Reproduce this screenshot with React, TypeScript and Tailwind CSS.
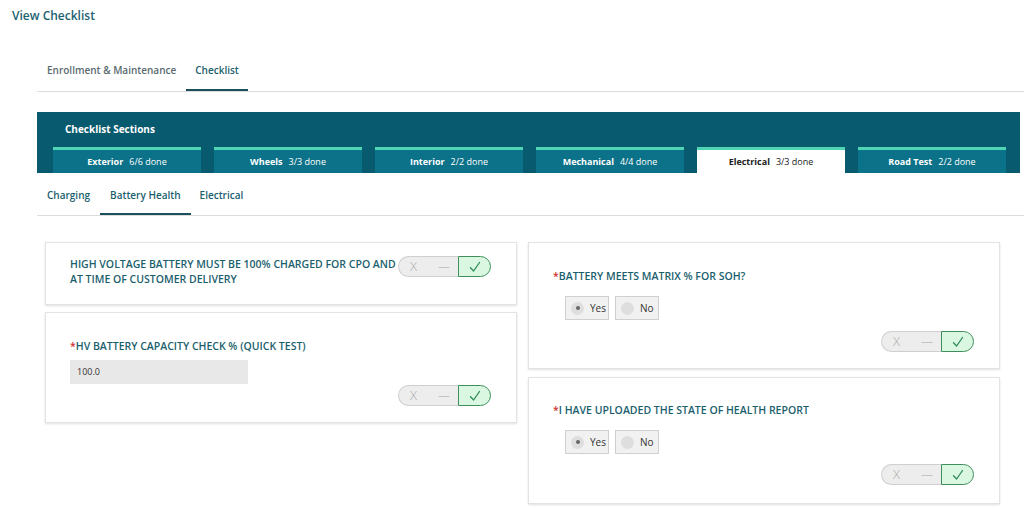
import React from "react";

const sections = [
  { name: "Exterior", done: "6/6 done" },
  { name: "Wheels", done: "3/3 done" },
  { name: "Interior", done: "2/2 done" },
  { name: "Mechanical", done: "4/4 done" },
  { name: "Electrical", done: "3/3 done", active: true },
  { name: "Road Test", done: "2/2 done" },
];

function Toggle() {
  return (
    <div className="flex h-[21px] w-[93px] items-stretch">
      <div className="flex flex-1 items-center rounded-l-full border border-r-0 border-[#cfcfcf] bg-[#ededed] pl-[11px] text-[13px] font-light text-[#a8a8a8]">
        <span className="w-[28px]">X</span>
        <span className="text-[12px]">—</span>
      </div>
      <div className="flex w-[33px] items-center justify-center rounded-r-full border border-[#3f8f5c] bg-[#d9f7e1]">
        <svg width="12" height="12" viewBox="0 0 12 12" fill="none">
          <path d="M1.5 6.8 L4.6 10 L10.5 1.5" stroke="#2e8b57" strokeWidth="1.3" strokeLinecap="round" strokeLinejoin="round" />
        </svg>
      </div>
    </div>
  );
}

function Radio({ label, checked }: { label: string; checked?: boolean }) {
  return (
    <div className="flex h-[24px] w-[44px] items-center gap-[6px] border border-[#d0d0d0] bg-[#f1f1f1] pl-[5px] text-[10px] text-[#333]">
      <span className="flex h-[13px] w-[13px] items-center justify-center rounded-full bg-[#dedede]">
        {checked && <span className="h-[4px] w-[4px] rounded-full bg-[#666]" />}
      </span>
      <span>{label}</span>
    </div>
  );
}

const cardCls =
  "border border-[#e3e3e3] shadow-[0_1px_2px_rgba(0,0,0,0.12)] pl-[24px] pr-[25px]";
const labelCls = "text-[10.5px] font-semibold text-[#1b5f6e] leading-[14px]";

export default function App() {
  return (
    <div
      className="h-[508px] w-[1024px] overflow-hidden bg-white"
      style={{ fontFamily: "'Open Sans', 'Noto Sans', sans-serif" }}
    >
      <div className="pl-[12px] pt-[7px] text-[12px] font-semibold leading-[17px] text-[#1b6272]">View Checklist</div>

      <div className="ml-[37px] mt-[39px] flex border-b border-[#dcdcdc] text-[10px] font-semibold leading-[14px]">
        <div className="px-[10px] pb-[14px] text-[#5a6b70]">Enrollment &amp; Maintenance</div>
        <div className="border-b-2 border-[#1b4f5c] px-[9px] pb-[12px] text-[#1b5f6e]">Checklist</div>
      </div>

      <div className="ml-[37px] mr-[4px] mt-[20px] h-[61px] bg-[#085a6e] pt-[10px]">
        <div className="pl-[28px] text-[10px] font-bold leading-[14px] text-white">Checklist Sections</div>
        <div className="mt-[11px] flex gap-[13px] pl-[16px]">
          {sections.map((s) => (
            <div
              key={s.name}
              className={`flex h-[26px] w-[148px] items-center justify-center gap-[6px] border-t-[3px] border-[#4fd4b4] text-[9px] ${
                s.active ? "bg-white text-[#222]" : "bg-[#0b7289] text-white"
              }`}
            >
              <span className="font-bold">{s.name}</span>
              <span>{s.done}</span>
            </div>
          ))}
        </div>
      </div>

      <div className="ml-[37px] mt-[8px] flex border-b border-[#dcdcdc] text-[10px] font-semibold leading-[14px] text-[#1b5f6e]">
        <div className="px-[10px] pb-[13px] pt-[7px]">Charging</div>
        <div className="border-b-2 border-[#1b4f5c] px-[10px] pb-[11px] pt-[7px]">Battery Health</div>
        <div className="px-[9px] pb-[13px] pt-[7px]">Electrical</div>
      </div>

      <div className="ml-[45px] mt-[26px] flex gap-[11px]">
        <div className="flex w-[472px] flex-col gap-[7px]">
          <div className={`flex h-[63px] items-start justify-between pt-[13px] ${cardCls}`}>
            <div className="mt-[1px] text-[10.5px] font-semibold leading-[15px] text-[#1b5f6e]">
              HIGH VOLTAGE BATTERY MUST BE 100% CHARGED FOR CPO AND
              <br />
              AT TIME OF CUSTOMER DELIVERY
            </div>
            <Toggle />
          </div>
          <div className={`flex h-[111px] flex-col pt-[26px] ${cardCls}`}>
            <div className={labelCls}>
              <span className="text-[#d03030]">*</span>HV BATTERY CAPACITY CHECK % (QUICK TEST)
            </div>
            <div className="mt-[7px] flex h-[24px] w-[178px] items-center bg-[#e8e8e8] px-[7px] text-[9px] text-[#333]">100.0</div>
            <div className="mt-[1px] flex justify-end">
              <Toggle />
            </div>
          </div>
        </div>

        <div className="flex w-[472px] flex-col gap-[8px]">
          <div className={`flex h-[127px] flex-col pt-[26px] ${cardCls}`}>
            <div className={labelCls}>
              <span className="text-[#d03030]">*</span>BATTERY MEETS MATRIX % FOR SOH?
            </div>
            <div className="mt-[13px] flex gap-[6px] pl-[12px]">
              <Radio label="Yes" checked />
              <Radio label="No" />
            </div>
            <div className="mt-[11px] flex justify-end">
              <Toggle />
            </div>
          </div>
          <div className={`flex h-[127px] flex-col pt-[25px] ${cardCls}`}>
            <div className={labelCls}>
              <span className="text-[#d03030]">*</span>I HAVE UPLOADED THE STATE OF HEALTH REPORT
            </div>
            <div className="mt-[13px] flex gap-[6px] pl-[12px]">
              <Radio label="Yes" checked />
              <Radio label="No" />
            </div>
            <div className="mt-[10px] flex justify-end">
              <Toggle />
            </div>
          </div>
        </div>
      </div>
    </div>
  );
}
